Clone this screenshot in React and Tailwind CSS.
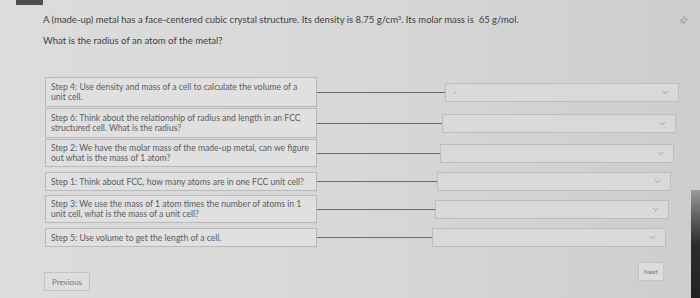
import { ChevronDown, Pin } from 'lucide-react';

const steps = [
  { text: 'Step 4: Use density and mass of a cell to calculate the volume of a unit cell.', h: 'h-[30px]', mt: 'mt-0' },
  { text: 'Step 6: Think about the relationship of radius and length in an FCC structured cell. What is the radius?', h: 'h-[30px]', mt: 'mt-px' },
  { text: 'Step 2: We have the molar mass of the made-up metal, can we figure out what is the mass of 1 atom?', h: 'h-[28px]', mt: 'mt-px' },
  { text: 'Step 1: Think about FCC, how many atoms are in one FCC unit cell?', h: 'h-[19px]', mt: 'mt-[5px]' },
  { text: 'Step 3: We use the mass of 1 atom times the number of atoms in 1 unit cell, what is the mass of a unit cell?', h: 'h-[28px]', mt: 'mt-[4px]' },
  { text: 'Step 5: Use volume to get the length of a cell.', h: 'h-[19px]', mt: 'mt-[5px]' },
];

function MatchRow({ step, index }) {
  return (
    <div className={`flex items-center ${step.mt}`}>
      <div
        className={`flex w-[272px] shrink-0 items-center border border-[#b9b9b9] bg-[#e0e0e0] pl-[5px] pr-[3px] text-[8.6px] leading-[10px] text-[#5c5c5c] ${step.h}`}
      >
        <span>{step.text}</span>
      </div>
      <div className="h-px flex-1 bg-[#6a6a6a]" />
      <div
        className="flex h-[19px] w-[234px] shrink-0 items-center justify-between border border-[#bdbdbd] bg-[#d9d9d9] pl-[8px] pr-[8px]"
        style={{ marginRight: `${index * 2.6}px` }}
      >
        <span className="text-[7px] text-[#8a8a8a]">{index === 0 ? '·' : ''}</span>
        <ChevronDown size={9} strokeWidth={2} className="text-[#8f8f8f]" />
      </div>
    </div>
  );
}

export default function App() {
  return (
    <div
      className="relative h-[298px] w-[700px] overflow-hidden bg-gradient-to-r from-[#dcdcdc] via-[#d8d8d8] to-[#cdcdcd] font-['Lato','Open_Sans',sans-serif] text-[#4a4a4a]"
    >
      <div className="ml-[16px] h-[5px] w-[27px] bg-[#4d4d4d]" />

      <div className="flex items-start justify-between pl-[43px] pr-[12px] pt-[9px]">
        <p className="text-[9.5px] leading-[12px] text-[#3f3f3f]">
          A (made-up) metal has a face-centered cubic crystal structure. Its density is 8.75 g/cm
          <sup className="text-[5.5px]">3</sup>. Its molar mass is&nbsp; 65 g/mol.
        </p>
        <Pin size={9} className="mt-[2px] rotate-45 text-[#8a8a8a]" />
      </div>

      <p className="mt-[9px] pl-[43px] text-[9.5px] leading-[12px] text-[#3f3f3f]">
        What is the radius of an atom of the metal?
      </p>

      <div className="ml-[45px] mr-[21px] mt-[30px] flex flex-col">
        {steps.map((step, i) => (
          <MatchRow key={i} step={step} index={i} />
        ))}
      </div>

      <div className="ml-[44px] mr-[36px] mt-[15px] flex items-start justify-between">
        <button className="mt-[10px] h-[19px] w-[46px] border border-[#c4c4c4] bg-[#dedede] text-[8px] text-[#777]">
          Previous
        </button>
        <button className="h-[19px] w-[26px] border border-[#c4c4c4] bg-[#dcdcdc] text-[6.5px] text-[#777]">
          Next
        </button>
      </div>

      <div className="absolute bottom-0 right-0 top-[190px] w-[9px] bg-gradient-to-b from-[#9a9a9a] via-[#2d2d2d] to-[#222]" />
    </div>
  );
}
